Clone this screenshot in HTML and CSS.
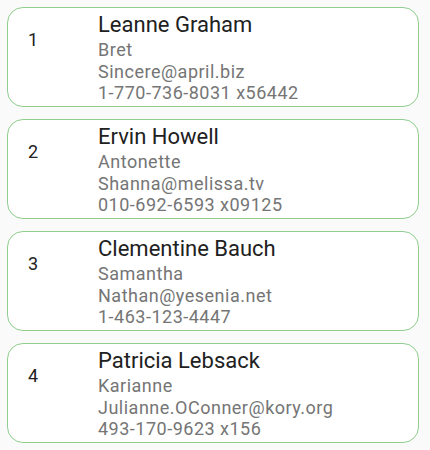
FILE: index.html
```html
<!DOCTYPE html>
<html>
<head>
  <title>Users</title>
  <link rel="stylesheet" href="styles.css">
</head>
<body>
  <div class="list">
    <div class="card">
      <div class="num">1</div>
      <div class="info">
        <div class="name">Leanne Graham</div>
        <div class="sub">Bret</div>
        <div class="sub">Sincere@april.biz</div>
        <div class="sub">1-770-736-8031 x56442</div>
      </div>
    </div>
    <div class="card">
      <div class="num">2</div>
      <div class="info">
        <div class="name">Ervin Howell</div>
        <div class="sub">Antonette</div>
        <div class="sub">Shanna@melissa.tv</div>
        <div class="sub">010-692-6593 x09125</div>
      </div>
    </div>
    <div class="card">
      <div class="num">3</div>
      <div class="info">
        <div class="name">Clementine Bauch</div>
        <div class="sub">Samantha</div>
        <div class="sub">Nathan@yesenia.net</div>
        <div class="sub">1-463-123-4447</div>
      </div>
    </div>
    <div class="card">
      <div class="num">4</div>
      <div class="info">
        <div class="name">Patricia Lebsack</div>
        <div class="sub">Karianne</div>
        <div class="sub">Julianne.OConner@kory.org</div>
        <div class="sub">493-170-9623 x156</div>
      </div>
    </div>
  </div>
</body>
</html>
```

FILE: styles.css
```css
body { margin: 0; background: #fafafa; font-family: Roboto, "Liberation Sans", sans-serif; }
.list { display: flex; flex-direction: column; gap: 12px; padding: 7px 11px 0 7px; }
.card { display: flex; align-items: flex-start; height: 100px; padding-top: 3px; box-sizing: border-box; background: #fff; border: 1.5px solid #8fce8f; border-radius: 16px; }
.num { width: 90px; margin-top: 16.5px; padding-left: 20px; box-sizing: border-box; font-size: 18px; line-height: 24px; color: #212121; }
.info { display: flex; flex-direction: column; }
.name { font-size: 22px; line-height: 28px; color: #212121; }
.sub { font-size: 18px; line-height: 21.5px; letter-spacing: 0.5px; color: #757575; }
```
